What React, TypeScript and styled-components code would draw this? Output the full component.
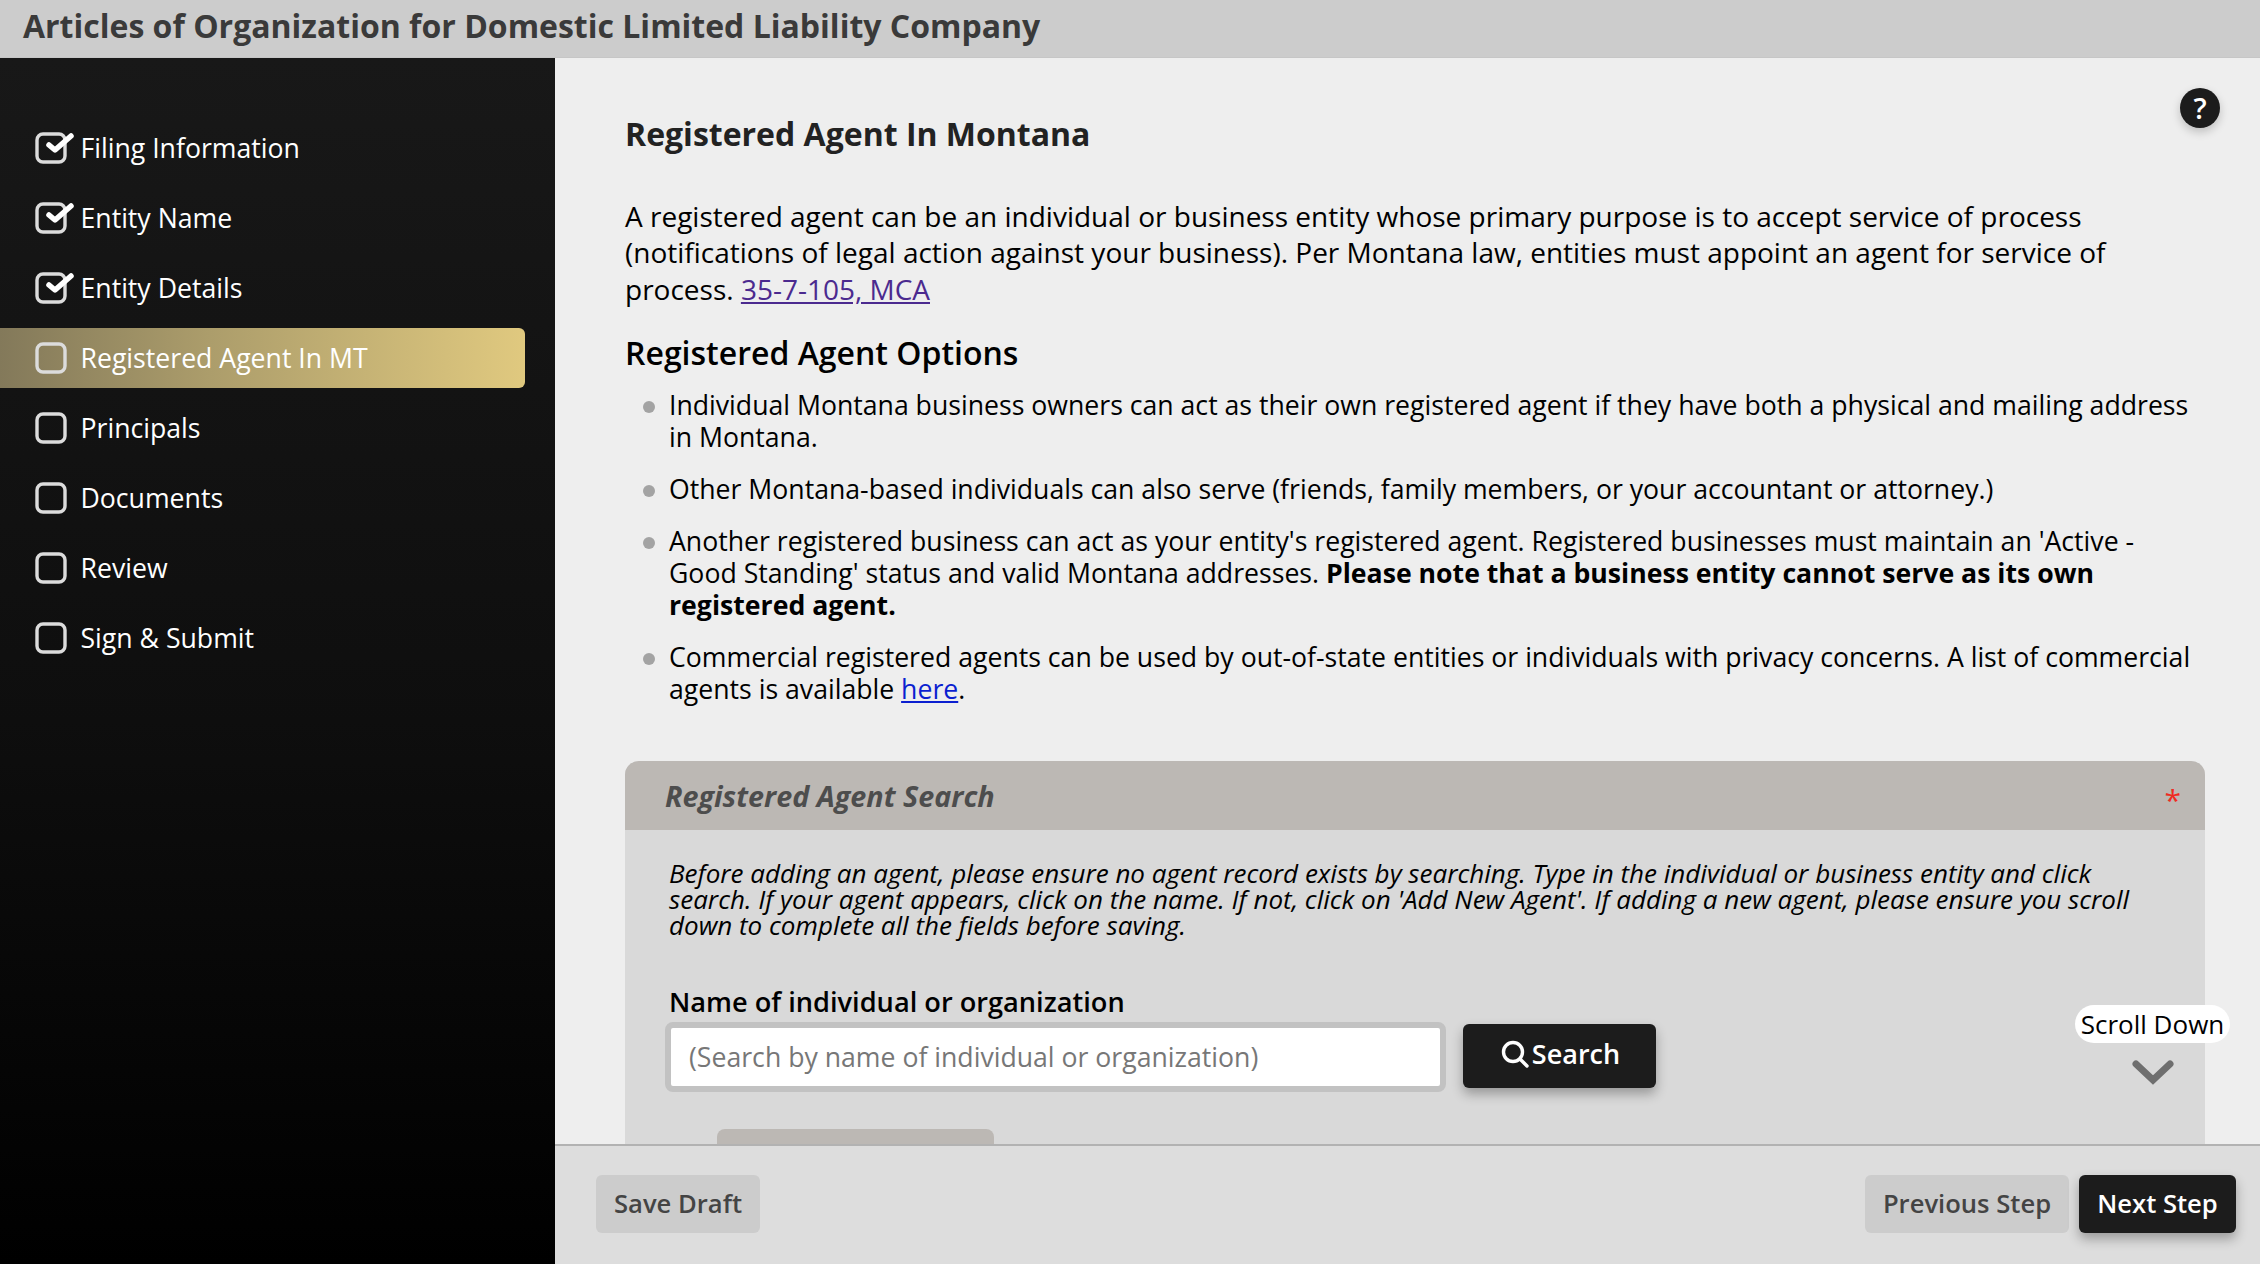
import React from "react";
import styled, { createGlobalStyle } from "styled-components";

const Global = createGlobalStyle`
  html, body { margin: 0; padding: 0; height: 100%; overflow: hidden; }
  body { font-family: "Open Sans", "Liberation Sans", sans-serif; color: #000; }
  * { box-sizing: border-box; }
`;

const Page = styled.div`
  width: 2260px;
  height: 1264px;
  display: flex;
  flex-direction: column;
  overflow: hidden;
`;

const TopBar = styled.header`
  height: 58px;
  flex: none;
  background: #cccccc;
  padding: 0 0 6px 23px;
  display: flex;
  align-items: center;
  border-bottom: 1px solid #c6c6c6;
`;

const PageTitle = styled.h1`
  margin: 0;
  font-size: 32px;
  font-weight: 700;
  color: #3a3a3a;
`;

const Body = styled.div`
  flex: 1;
  min-height: 0;
  display: flex;
`;

const Sidebar = styled.nav`
  width: 555px;
  flex: none;
  background: linear-gradient(180deg, #181818 0%, #0e0e0e 55%, #000 100%);
  padding: 60px 30px 0 0;
  display: flex;
  flex-direction: column;
  gap: 10px;
`;

const NavItem = styled.div<{ $active?: boolean }>`
  height: 60px;
  display: flex;
  align-items: center;
  padding-left: 35px;
  gap: 14px;
  font-size: 26.65px;
  color: #fff;
  border-radius: 0 6px 6px 0;
  background: ${(p) => (p.$active ? "linear-gradient(90deg, #83795a 0%, #ac9d6b 40%, #e0c97f 100%)" : "transparent")};
`;

const Box = styled.svg`
  width: 36px;
  height: 36px;
  flex: none;
  overflow: visible;
  margin-right: -4.5px;
`;

const Main = styled.main`
  flex: 1;
  min-width: 0;
  display: flex;
  flex-direction: column;
  position: relative;
`;

const Scroller = styled.div`
  flex: 1;
  min-height: 0;
  overflow: hidden;
  background: #eeeeee;
  padding: 54px 55px 0 70px;
`;

const Heading = styled.h2`
  margin: 0 0 41.5px;
  font-size: 32px;
  line-height: 44px;
  font-weight: 700;
  color: #222;
`;

const Para = styled.p`
  margin: 0 0 23.5px;
  font-size: 28px;
  line-height: 36.7px;
`;

const Sub = styled.h3`
  margin: 0 0 14px;
  font-size: 32px;
  line-height: 44px;
  font-weight: 600;
`;

const Options = styled.ul`
  margin: 0;
  padding: 0 0 0 44px;
  list-style: none;
  display: flex;
  flex-direction: column;
  gap: 20px;
`;

const Option = styled.li`
  font-size: 26.65px;
  line-height: 32px;
  position: relative;
  &::before {
    content: "";
    position: absolute;
    left: -26px;
    top: 12px;
    width: 12px;
    height: 12px;
    border-radius: 50%;
    background: #a3a3a3;
  }
`;

const VisitedLink = styled.a`
  color: #4b2a8f;
  text-decoration: underline;
`;

const PlainLink = styled.a`
  color: #0b1fd0;
  text-decoration: underline;
`;

const Panel = styled.section`
  margin-top: 56px;
  background: #d9d9d9;
  border-radius: 14px 14px 0 0;
  height: 500px;
`;

const PanelHead = styled.div`
  height: 69px;
  background: #bcb8b4;
  border-radius: 14px 14px 0 0;
  padding: 0 24px 0 40px;
  display: flex;
  align-items: center;
  justify-content: space-between;
`;

const PanelTitle = styled.div`
  font-size: 28.75px;
  font-weight: 700;
  font-style: italic;
  color: #4d4d4d;
`;

const Required = styled.span`
  color: #ef2b22;
  font-size: 30px;
  line-height: 30px;
  padding-top: 8px;
`;

const PanelBody = styled.div`
  padding: 30px 44px 0;
`;

const Hint = styled.p`
  margin: 0 0 46px;
  font-size: 26px;
  line-height: 26px;
  font-style: italic;
`;

const FieldLabel = styled.label`
  display: block;
  font-size: 27.2px;
  line-height: 36px;
  font-weight: 600;
  margin-bottom: 2px;
`;

const SearchRow = styled.div`
  display: flex;
  align-items: flex-start;
  gap: 17px;
  margin-left: -4px;
`;

const Input = styled.input`
  width: 781px;
  height: 70px;
  border: 6px solid #c2c2c2;
  border-radius: 8px;
  background: #fff;
  padding: 0 18px;
  font-family: inherit;
  font-size: 26.65px;
  &::placeholder { color: #777; opacity: 1; }
`;

const DarkButton = styled.button`
  background: #1c1c1c;
  color: #fff;
  border: 0;
  border-radius: 6px;
  font-family: inherit;
  font-weight: 600;
  box-shadow: 0 6px 12px rgba(0, 0, 0, 0.3);
  display: flex;
  align-items: center;
  justify-content: center;
`;

const SearchButton = styled(DarkButton)`
  width: 193px;
  height: 64px;
  margin-top: 2px;
  padding: 0 0 5px 2px;
  gap: 3px;
  font-size: 27px;
`;

const SubTab = styled.div`
  margin: 37px 0 0 48px;
  width: 277px;
  height: 60px;
  background: #bcb8b4;
  border-radius: 8px 8px 0 0;
`;

const Footer = styled.footer`
  height: 120px;
  flex: none;
  background: #dddddd;
  border-top: 2px solid #b2b2b2;
  padding: 29px 24px 0 41px;
  display: flex;
  align-items: flex-start;
  justify-content: space-between;
`;

const FootGroup = styled.div`
  display: flex;
  gap: 10px;
`;

const GreyButton = styled.button`
  height: 58px;
  padding: 0 18px 2px;
  border: 0;
  border-radius: 6px;
  background: #cccccc;
  color: #444;
  font-family: inherit;
  font-weight: 600;
  font-size: 25.6px;
`;

const NextButton = styled(DarkButton)`
  height: 58px;
  padding: 0 18.2px 2px;
  font-size: 25.6px;
`;

const Help = styled.button`
  position: absolute;
  top: 30px;
  right: 40px;
  width: 40px;
  height: 40px;
  border: 0;
  padding: 0;
  border-radius: 50%;
  background: #1c1c1c;
  color: #fff;
  font-family: inherit;
  font-size: 29px;
  font-weight: 600;
  line-height: 40px;
  box-shadow: 0 4px 10px rgba(0, 0, 0, 0.2);
`;

const ScrollHint = styled.div`
  position: absolute;
  top: 947px;
  right: 30px;
  display: flex;
  flex-direction: column;
  align-items: center;
  gap: 17px;
`;

const ScrollPill = styled.div`
  width: 155px;
  height: 38px;
  background: #fff;
  border-radius: 19px;
  font-size: 26px;
  line-height: 38px;
  text-align: center;
`;

const Chevron = styled.svg`
  width: 42px;
  height: 26px;
`;

const items = [
  ["Filing Information", true],
  ["Entity Name", true],
  ["Entity Details", true],
  ["Registered Agent In MT", false],
  ["Principals", false],
  ["Documents", false],
  ["Review", false],
  ["Sign & Submit", false],
] as const;

function CheckIcon({ checked }: { checked: boolean }) {
  return (
    <Box viewBox="0 0 36 36">
      <rect x="2" y="4" width="28" height="28" rx="6" fill="none" stroke="#dcdcdc" strokeWidth="3.4" />
      {checked && (
        <path d="M14 15 L20 20 L36 6" fill="none" stroke="#fff" strokeWidth="5.5" strokeLinecap="round" strokeLinejoin="round" />
      )}
    </Box>
  );
}

export default function App() {
  return (
    <Page>
      <Global />
      <TopBar>
        <PageTitle>Articles of Organization for Domestic Limited Liability Company</PageTitle>
      </TopBar>
      <Body>
        <Sidebar>
          {items.map(([label, checked], i) => (
            <NavItem key={label} $active={i === 3}>
              <CheckIcon checked={checked} />
              <span>{label}</span>
            </NavItem>
          ))}
        </Sidebar>
        <Main>
          <Scroller>
            <Heading>Registered Agent In Montana</Heading>
            <Para>
              A registered agent can be an individual or business entity whose primary purpose is to accept service of process
              (notifications of legal action against your business). Per Montana law, entities must appoint an agent for service of
              process. <VisitedLink href="#">35-7-105, MCA</VisitedLink>
            </Para>
            <Sub>Registered Agent Options</Sub>
            <Options>
              <Option>
                Individual Montana business owners can act as their own registered agent if they have both a physical and mailing address in Montana.
              </Option>
              <Option>
                Other Montana-based individuals can also serve (friends, family members, or your accountant or attorney.)
              </Option>
              <Option>
                Another registered business can act as your entity's registered agent. Registered businesses must maintain an 'Active - Good Standing' status and valid Montana addresses.{" "}
                <b>Please note that a business entity cannot serve as its own registered agent.</b>
              </Option>
              <Option>
                Commercial registered agents can be used by out-of-state entities or individuals with privacy concerns. A list of commercial agents is available <PlainLink href="#">here</PlainLink>.
              </Option>
            </Options>
            <Panel>
              <PanelHead>
                <PanelTitle>Registered Agent Search</PanelTitle>
                <Required>*</Required>
              </PanelHead>
              <PanelBody>
                <Hint>
                  Before adding an agent, please ensure no agent record exists by searching. Type in the individual or business entity and click search. If your agent appears, click on the name. If not, click on 'Add New Agent'. If adding a new agent, please ensure you scroll down to complete all the fields before saving.
                </Hint>
                <FieldLabel>Name of individual or organization</FieldLabel>
                <SearchRow>
                  <Input placeholder="(Search by name of individual or organization)" />
                  <SearchButton>
                    <svg width="28" height="28" viewBox="0 0 28 28" fill="none" stroke="#fff" strokeWidth="3.4" strokeLinecap="round">
                      <circle cx="12" cy="12" r="9.5" />
                      <path d="M19 19 L26 26" />
                    </svg>
                    Search
                  </SearchButton>
                </SearchRow>
                <SubTab />
              </PanelBody>
            </Panel>
          </Scroller>
          <Footer>
            <GreyButton>Save Draft</GreyButton>
            <FootGroup>
              <GreyButton>Previous Step</GreyButton>
              <NextButton>Next Step</NextButton>
            </FootGroup>
          </Footer>
          <Help>?</Help>
          <ScrollHint>
            <ScrollPill>Scroll Down</ScrollPill>
            <Chevron viewBox="0 0 42 26">
              <path d="M4 4 L21 20 L38 4" fill="none" stroke="#6f6f6f" strokeWidth="7" strokeLinecap="round" strokeLinejoin="miter" />
            </Chevron>
          </ScrollHint>
        </Main>
      </Body>
    </Page>
  );
}
